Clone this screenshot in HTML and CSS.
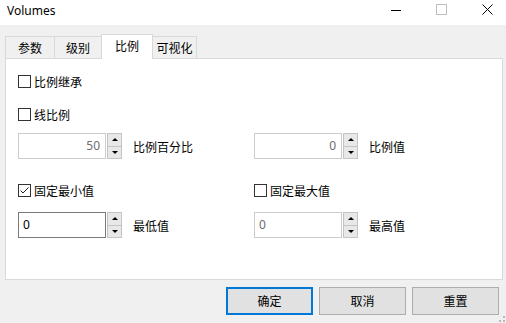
FILE: index.html
```html
<!DOCTYPE html>
<html lang="zh">

<head>
    <meta charset="UTF-8">
    <meta name="viewport" content="width=device-width, initial-scale=1.0">
    <title>Volumes</title>
    <link rel="stylesheet" href="styles.css">
</head>

<body>
    <div class="window">
        <div class="titlebar">
            <span class="title">Volumes</span>
            <div class="controls">
                <svg class="ctl" width="10" height="10" viewBox="0 0 10 10"><path d="M0 5.5H10" stroke="#000" stroke-width="1"/></svg>
                <svg class="ctl" width="11" height="11" viewBox="0 0 11 11"><rect x="0.5" y="0.5" width="10" height="10" fill="none" stroke="#bdbdbd"/></svg>
                <svg class="ctl" width="11" height="11" viewBox="0 0 11 11"><path d="M0.5 0.5L10.5 10.5M10.5 0.5L0.5 10.5" stroke="#000" stroke-width="1"/></svg>
            </div>
        </div>

        <div class="tabs">
            <div class="tab t1">参数</div>
            <div class="tab t2">级别</div>
            <div class="tab t3 active">比例</div>
            <div class="tab t4">可视化</div>
        </div>

        <div class="panel">
            <div class="check r1"><span class="box"></span>比例继承</div>
            <div class="check r2"><span class="box"></span>线比例</div>

            <div class="row r3">
                <div class="col">
                    <div class="spin disabled">
                        <div class="field num">50</div>
                        <div class="arrows"><span class="up"></span><span class="down"></span></div>
                    </div>
                    <span class="label">比例百分比</span>
                </div>
                <div class="col">
                    <div class="spin disabled">
                        <div class="field num">0</div>
                        <div class="arrows"><span class="up"></span><span class="down"></span></div>
                    </div>
                    <span class="label">比例值</span>
                </div>
            </div>

            <div class="row r4">
                <div class="col">
                    <div class="check">
                        <span class="box">
                            <svg width="11" height="11" viewBox="0 0 11 11"><path d="M1.5 5.5L4 8L9.5 2.5" fill="none" stroke="#222" stroke-width="1"/></svg>
                        </span>固定最小值
                    </div>
                </div>
                <div class="col">
                    <div class="check"><span class="box"></span>固定最大值</div>
                </div>
            </div>

            <div class="row r5">
                <div class="col">
                    <div class="spin">
                        <div class="field">0</div>
                        <div class="arrows"><span class="up"></span><span class="down"></span></div>
                    </div>
                    <span class="label">最低值</span>
                </div>
                <div class="col">
                    <div class="spin disabled">
                        <div class="field">0</div>
                        <div class="arrows"><span class="up"></span><span class="down"></span></div>
                    </div>
                    <span class="label">最高值</span>
                </div>
            </div>
        </div>

        <div class="buttons">
            <div class="btn default">确定</div>
            <div class="btn">取消</div>
            <div class="btn">重置</div>
        </div>

        <svg class="grip" width="6" height="6" viewBox="0 0 6 6">
            <rect x="4" y="0" width="2" height="2" fill="#b8b8b8"/>
            <rect x="0" y="4" width="2" height="2" fill="#b8b8b8"/>
            <rect x="4" y="4" width="2" height="2" fill="#b8b8b8"/>
        </svg>
    </div>
</body>

</html>
```

FILE: styles.css
```css
* {
    margin: 0;
    padding: 0;
    box-sizing: border-box;
}

body {
    width: 506px;
    height: 323px;
    overflow: hidden;
    font-family: "Noto Sans CJK SC", "Noto Sans", sans-serif;
    font-size: 12px;
    color: #000;
}

.window {
    position: relative;
    width: 506px;
    height: 323px;
    background-color: #f0f0f0;
}

/* 标题栏 */
.titlebar {
    height: 25px;
    background-color: #fff;
    display: flex;
    align-items: center;
    justify-content: space-between;
}

.title {
    font-family: "Noto Sans", sans-serif;
    font-size: 12px;
    padding-left: 7px;
    margin-top: -4px;
}

.controls {
    display: flex;
    align-items: center;
    gap: 35px;
    padding-right: 13px;
    margin-top: -6px;
}

.ctl {
    display: block;
}

/* 选项卡 */
.tabs {
    display: flex;
    align-items: flex-end;
    height: 24px;
    margin-top: 9px;
    padding-left: 5px;
}

.tab {
    height: 22px;
    line-height: 21px;
    text-align: center;
    border: 1px solid #d9d9d9;
    border-bottom: none;
    background-color: #f0f0f0;
    margin-right: -1px;
}

.t1 {
    width: 50px;
}

.t2 {
    width: 48px;
}

.t3 {
    width: 52px;
}

.t4 {
    width: 45px;
}

.tab.active {
    position: relative;
    z-index: 1;
    height: 25px;
    line-height: 22px;
    background-color: #fff;
    margin-bottom: -1px;
}

/* 面板 */
.panel {
    width: 498px;
    height: 222px;
    margin-left: 5px;
    background-color: #fff;
    border: 1px solid #d9d9d9;
    padding: 16px 0 0 12px;
}

.check {
    display: flex;
    align-items: center;
    height: 13px;
    line-height: 13px;
}

.box {
    width: 13px;
    height: 13px;
    border: 1px solid #333;
    background-color: #fff;
    margin-right: 3px;
    display: flex;
}

.r2 {
    margin-top: 20px;
}

.row {
    display: flex;
}

.col {
    width: 236px;
    display: flex;
    align-items: center;
}

.r3 {
    margin-top: 12px;
}

.r4 {
    margin-top: 25px;
}

.r5 {
    margin-top: 15px;
}

/* 数字输入框 */
.spin {
    display: flex;
    height: 26px;
}

.field {
    width: 88px;
    height: 26px;
    border: 1px solid #7a7a7a;
    background-color: #fff;
    font-family: "Noto Sans", sans-serif;
    line-height: 23px;
    padding: 0 4px;
}

.field.num {
    text-align: right;
    padding-right: 5px;
}

.spin.disabled .field {
    border-color: #cccccc;
    color: #6d6d6d;
}

.arrows {
    width: 15px;
    margin-left: 1px;
    display: flex;
    flex-direction: column;
}

.arrows span {
    flex: 1;
    border: 1px solid #c4c4c4;
    background-color: #e8e8e8;
    display: flex;
    align-items: center;
    justify-content: center;
}

.arrows .down {
    border-top: none;
}

.arrows .up::after {
    content: "";
    border-left: 3px solid transparent;
    border-right: 3px solid transparent;
    border-bottom: 3px solid #000;
}

.arrows .down::after {
    content: "";
    border-left: 3px solid transparent;
    border-right: 3px solid transparent;
    border-top: 3px solid #000;
}

.label {
    margin-left: 11px;
}

/* 按钮 */
.buttons {
    display: flex;
    justify-content: flex-end;
    gap: 6px;
    margin-top: 7px;
    padding-right: 7px;
}

.btn {
    width: 87px;
    height: 28px;
    line-height: 26px;
    text-align: center;
    background-color: #e1e1e1;
    border: 1px solid #adadad;
}

.btn.default {
    border: 2px solid #0078d7;
    line-height: 24px;
}

.grip {
    position: absolute;
    right: 1px;
    bottom: 1px;
}
```
